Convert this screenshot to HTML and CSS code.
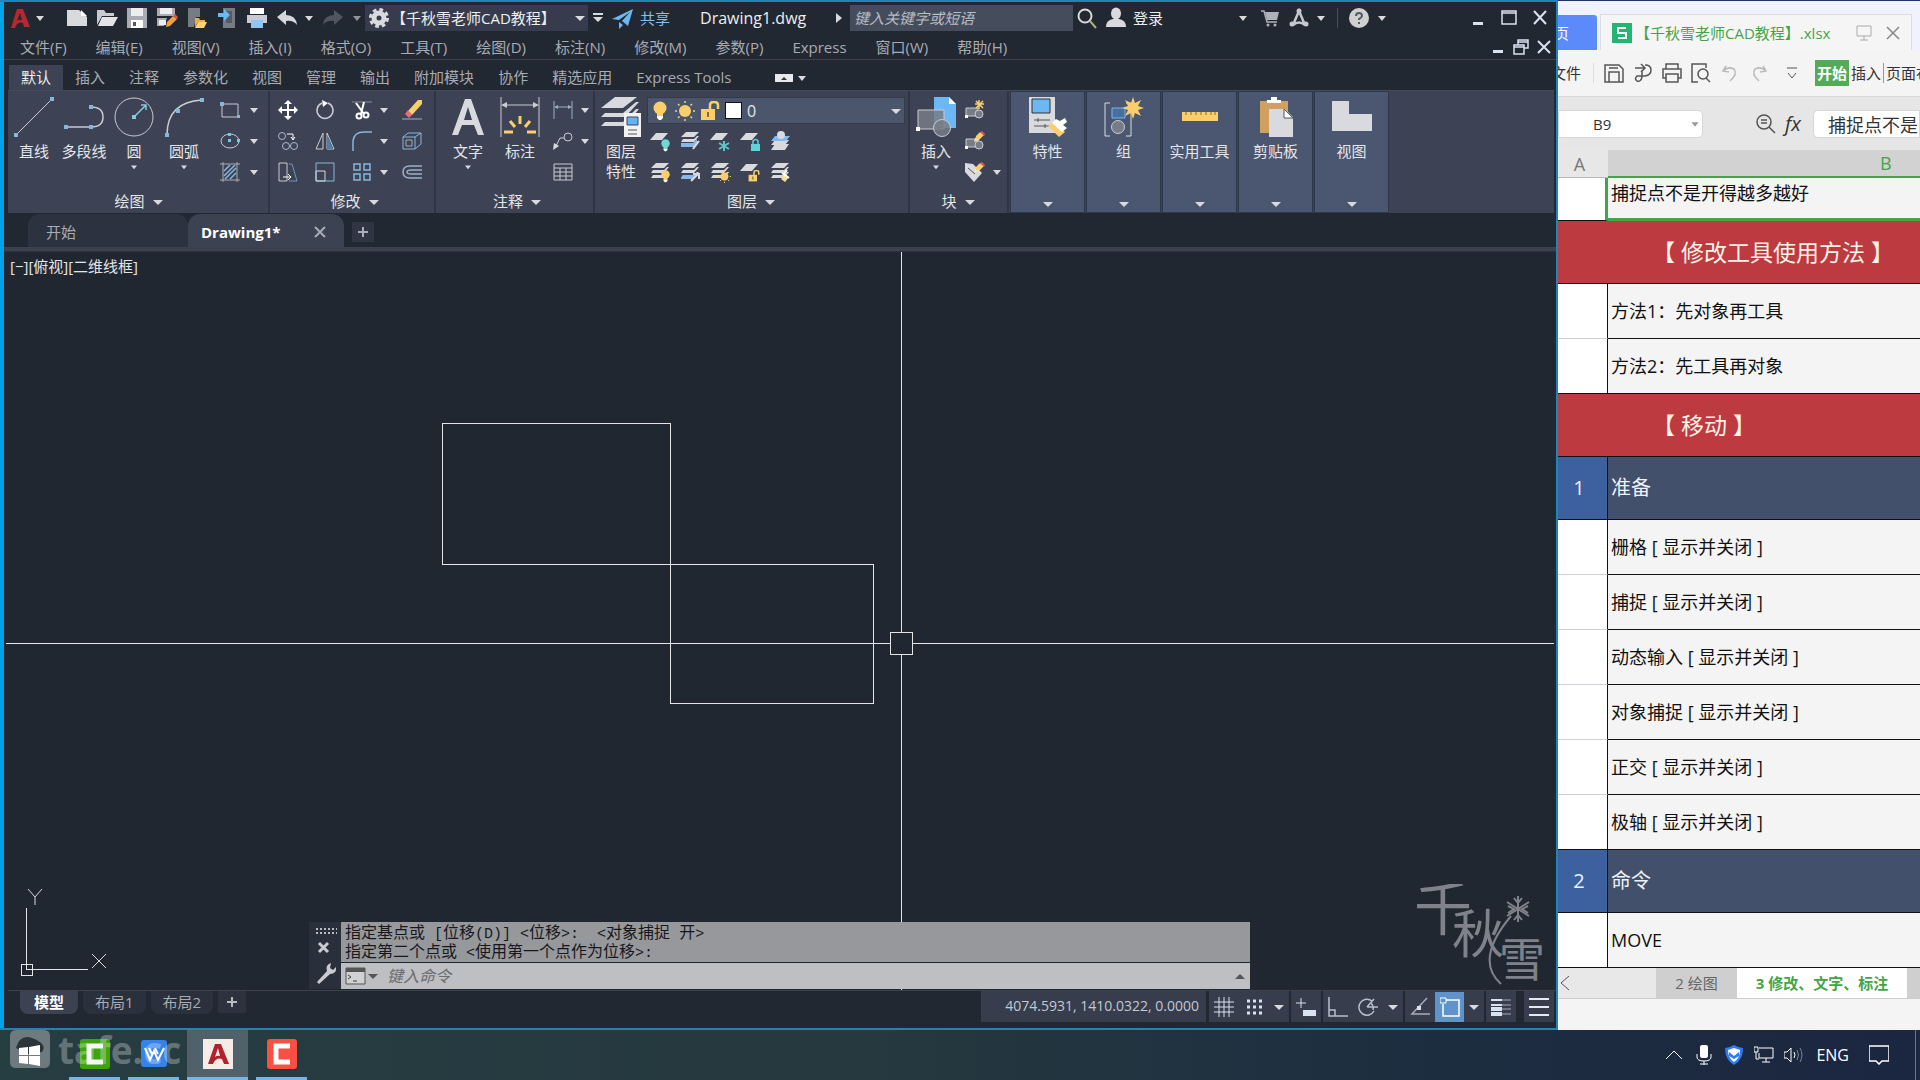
FILE: index.html
```html
<!DOCTYPE html>
<html lang="zh-CN">
<head>
<meta charset="utf-8">
<title>Drawing1.dwg</title>
<link rel="stylesheet" href="styles.css">
</head>
<body>
<svg class="sprite" aria-hidden="true">
  <symbol id="caret" viewBox="0 0 16 16"><path d="M4 6h8l-4 5z" fill="currentColor"/></symbol>
  <symbol id="caret-lg" viewBox="0 0 16 16"><path d="M3 6h10l-5 5z" fill="currentColor"/></symbol>
  <symbol id="stack" viewBox="0 0 20 20"><g fill="#d9dade"><path d="M6 1h13l-5 5H1z"/><path d="M3 8h11l3-3h2l-5 6H1z"/><path d="M3 13h11l3-3h2l-5 6H1z"/></g></symbol>
  <symbol id="sheet1" viewBox="0 0 20 20"><path d="M6 2h12l-6 7H0z" fill="#d9dade"/></symbol>
  <symbol id="bulb" viewBox="0 0 20 20"><circle cx="10" cy="7" r="6.500" fill="currentColor"/><path d="M7 12h6v4H7z" fill="currentColor"/><path d="M7 15h6v2l-2 2H9l-2-2z" fill="#fff"/></symbol>
  <symbol id="sun" viewBox="0 0 20 20"><circle cx="10" cy="10" r="6" fill="#fbce6c"/><path d="M10 0v2M10 18v2M0 10h2M18 10h2M3 3l1.500 1.500M15.500 15.500L17 17M17 3l-1.500 1.500M4.500 15.500L3 17" stroke="#fbce6c" stroke-width="1.500"/></symbol>
  <symbol id="lock" viewBox="0 0 20 20"><path d="M1 8h14v11H1z" fill="currentColor"/><path d="M10 9V4q0-3 4-3t4 3v4" fill="none" stroke="currentColor" stroke-width="2.500"/><path d="M8 11v5" stroke="#8a6a30" stroke-width="2"/></symbol>
  <symbol id="shapes" viewBox="0 0 20 20"><path d="M1 8h12v8H1z" fill="#777c87" stroke="#c9ccd3"/><circle cx="14" cy="14" r="4" fill="#777c87" stroke="#c9ccd3"/><path d="M0 15h3v3H0z" fill="#fff"/></symbol>
  <symbol id="pencil" viewBox="0 0 20 20"><path d="M10 9l1-4 4-4 4 3-5 5z" fill="#fbce6c"/><path d="M15 1l2-1 3 3-1 2z" fill="#e05060"/><path d="M9 11l1-4 4 2z" fill="#f2e3c4"/></symbol>
</svg>
<div class="desktop">
<main class="cad">
  <header class="titlebar">
    <button class="ic24" aria-label="应用程序菜单"><svg viewBox="0 0 24 24"><path d="M3 22L9 3h6l7 18h-6l-1-4q-5-2-7 3l-1 2z" fill="#b8262f"/><path d="M12 7l2 7q-3-1-5 1z" fill="#222832"/></svg></button>
    <svg class="caret"><use href="#caret"/></svg>
    <div class="quick">
      <button aria-label="新建"><svg viewBox="0 0 22 22"><path d="M1 3h12l8 7v9H1z" fill="#d9dade"/><path d="M15 3l6 6h-6z" fill="#fff"/></svg></button>
      <button aria-label="打开"><svg viewBox="0 0 22 22"><path d="M1 3h7l2 3h8v3H6L1 18z" fill="#c9cbd0"/><path d="M6 10h16l-5 9H2z" fill="#e3e4e8"/></svg></button>
      <button aria-label="保存"><svg viewBox="0 0 22 22"><path d="M1 1h20v20H1z" fill="#a9acb3"/><path d="M5 1h12v8H5z" fill="#eee"/><path d="M5 13h12v8H5z" fill="#fff"/><path d="M7 15h3v4H7z" fill="#555"/></svg></button>
      <button aria-label="另存为"><svg viewBox="0 0 22 22"><path d="M1 1h18v8H1zM1 11h10l-3 8H1z" fill="#a9acb3"/><path d="M4 1h12v6H4zM3 13h7v5H3z" fill="#eee"/><path d="M10 20l1-5 6-6 4 3-7 7z" fill="#f0a040"/><path d="M17 9l2-2 3 3-1 2z" fill="#e05050"/></svg></button>
      <button aria-label="从移动设备打开"><svg viewBox="0 0 22 22"><path d="M2 1h12v9h-4l-2 10H2z" fill="#777b84"/><path d="M9 11h4l1 2h5v2h-7l-3 5z" fill="#f0a850"/><path d="M12 15h9l-3 6H9z" fill="#ffd27a"/></svg></button>
      <button aria-label="保存到移动设备"><svg viewBox="0 0 22 22"><path d="M7 1h12v20H7z" fill="#777b84"/><path d="M10 4h6v12h-6z" fill="#555a65"/><path d="M2 6h6V2l6 6-6 6v-4H2z" fill="#6cb8f0"/></svg></button>
      <button aria-label="打印"><svg viewBox="0 0 22 22"><path d="M4 1h14v6H4z" fill="#fff"/><path d="M1 8h20v8H1z" fill="#c9cbd0"/><path d="M5 13h12v8H5z" fill="#8fc4f5"/></svg></button>
      <button aria-label="放弃"><svg viewBox="0 0 22 22"><path d="M1 10l9-7v5q10 0 11 10-4-5-11-4v4z" fill="#d5d7dc"/></svg></button>
    </div>
    <svg class="caret"><use href="#caret"/></svg>
    <button class="redo" aria-label="重做"><svg viewBox="0 0 22 22"><path d="M21 10l-9-7v5Q2 8 1 18q4-5 11-4v4z" fill="#50555f"/></svg></button>
    <svg class="caret dim"><use href="#caret"/></svg>
    <label class="workspace"><svg viewBox="0 0 20 20"><circle cx="10" cy="10" r="5" fill="none" stroke="#d9dade" stroke-width="5"/><circle cx="10" cy="10" r="8.500" fill="none" stroke="#d9dade" stroke-width="3" stroke-dasharray="3.700 3"/></svg><select aria-label="工作空间"><option>【千秋雪老师CAD教程】</option></select><svg class="caret"><use href="#caret-lg"/></svg></label>
    <svg class="more" viewBox="0 0 16 16"><path d="M3 3h10v2H3zM3 7h10l-5 5z" fill="#d9dade"/></svg>
    <button class="share"><svg viewBox="0 0 22 22"><path d="M0 12L21 2l-5 17-6-5 8-9-11 8z" fill="#6cb8f0"/><path d="M7 15l4 3-4 4z" fill="#6cb8f0"/></svg>共享</button>
    <h1>Drawing1.dwg</h1>
    <svg class="tri" viewBox="0 0 10 16"><path d="M2 3l6 5-6 5z" fill="#d9dade"/></svg>
    <input class="search" aria-label="搜索" placeholder="键入关键字或短语">
    <button class="ic24" aria-label="搜索"><svg viewBox="0 0 24 24"><circle cx="10" cy="10" r="6.500" fill="none" stroke="#d9dade" stroke-width="2"/><path d="M15 15l6 7" stroke="#aab078" stroke-width="2"/></svg></button>
    <button class="login"><svg viewBox="0 0 22 22"><ellipse cx="11" cy="6.500" rx="5" ry="6" fill="#d9dade"/><path d="M1 20q0-7 7-8h6q7 1 7 8z" fill="#d9dade"/></svg>登录</button>
    <div class="apps">
      <svg class="caret"><use href="#caret"/></svg>
      <button aria-label="购物车"><svg viewBox="0 0 20 20"><path d="M1 3h3l3 11h10" fill="none" stroke="#aeb1b7" stroke-width="1.500"/><path d="M5 4h14l-2 8H7z" fill="#aeb1b7"/><circle cx="8" cy="17" r="1.500" fill="#aeb1b7"/><circle cx="15" cy="17" r="1.500" fill="#aeb1b7"/></svg></button>
      <button aria-label="应用"><svg viewBox="0 0 20 20"><path d="M10 3L4 17q6-5 12 0z" fill="none" stroke="#c5c8ce" stroke-width="2.500"/><circle cx="10" cy="3" r="2.500" fill="#c5c8ce"/><circle cx="3" cy="16" r="2.500" fill="#c5c8ce"/><circle cx="17" cy="16" r="2.500" fill="#c5c8ce"/></svg></button>
      <svg class="caret tight"><use href="#caret"/></svg>
    </div>
    <div class="help"><button aria-label="帮助"><svg viewBox="0 0 20 20"><circle cx="10" cy="10" r="10" fill="#d0d0d0"/><path d="M7 8q0-3 3-3t3 3q0 1-3 3v1M10 14v2" fill="none" stroke="#555b66" stroke-width="2"/></svg></button><svg class="caret"><use href="#caret"/></svg></div>
    <div class="winbtns">
      <button aria-label="最小化"><svg viewBox="0 0 16 16"><path d="M3 12h10v3H3z" fill="#d9e2f0"/></svg></button>
      <button aria-label="最大化"><svg viewBox="0 0 16 16"><path d="M1 1h14v13H1zM1 3h14" fill="none" stroke="#d9e2f0" stroke-width="1.500"/></svg></button>
      <button aria-label="关闭"><svg viewBox="0 0 16 16"><path d="M2 1l12 13M14 1L2 14" stroke="#d9e2f0" stroke-width="2"/></svg></button>
    </div>
  </header>
  <nav class="menubar">
    <a href="#">文件(F)</a><a href="#">编辑(E)</a><a href="#">视图(V)</a><a href="#">插入(I)</a><a href="#">格式(O)</a><a href="#">工具(T)</a><a href="#">绘图(D)</a><a href="#">标注(N)</a><a href="#">修改(M)</a><a href="#">参数(P)</a><a href="#">Express</a><a href="#">窗口(W)</a><a href="#">帮助(H)</a>
    <div class="docbtns">
      <button aria-label="最小化图形"><svg viewBox="0 0 16 16"><path d="M3 11h10v3H3z" fill="#d9e2f0"/></svg></button>
      <button aria-label="还原图形"><svg viewBox="0 0 16 16"><path d="M5 6V1h10v8h-4M1 6h10v9H1zM1 8h10M5 3h10" fill="none" stroke="#d9e2f0" stroke-width="1.500"/></svg></button>
      <button aria-label="关闭图形"><svg viewBox="0 0 16 16"><path d="M2 2l12 12M14 2L2 14" stroke="#d9e2f0" stroke-width="2"/></svg></button>
    </div>
  </nav>
  <nav class="tabs">
    <a href="#" class="on">默认</a><a href="#">插入</a><a href="#">注释</a><a href="#">参数化</a><a href="#">视图</a><a href="#">管理</a><a href="#">输出</a><a href="#">附加模块</a><a href="#">协作</a><a href="#">精选应用</a><a href="#">Express Tools</a>
    <button class="fold" aria-label="最小化功能区"><svg viewBox="0 0 36 16"><path d="M2 4h18v8H2z" fill="#e8e9ec"/><path d="M8 10l3-3 3 3z" fill="#333"/><path d="M25 6h8l-4 5z" fill="#d9dade"/></svg></button>
  </nav>
  <section class="ribbon">
    <div class="panel draw">
      <div class="tools">
        <button class="big"><svg viewBox="0 0 40 40"><path d="M2 38L38 2" stroke="#c9ccd3"/><path d="M0 36h4v4H0zM36 0h4v4h-4z" fill="#86b8dc"/></svg>直线</button>
        <button class="big wide"><svg viewBox="0 0 40 40"><path d="M1 30h26q12 0 12-10T27 10" fill="none" stroke="#c9ccd3" stroke-width="1.500"/><path d="M0 28h4v4H0zM25 28h4v4h-4zM25 8h4v4h-4z" fill="#86b8dc"/></svg>多段线</button>
        <button class="big"><svg viewBox="0 0 40 40"><circle cx="20" cy="20" r="19" fill="none" stroke="#c9ccd3"/><path d="M20 20L32 8M27 8h5v5" fill="none" stroke="#86c8dc" stroke-width="1.500"/><path d="M18 18h4v4h-4z" fill="#86c8dc"/></svg>圆<svg class="caret"><use href="#caret"/></svg></button>
        <button class="big wide"><svg viewBox="0 0 40 40"><path d="M3 38Q3 5 38 3" fill="none" stroke="#c9ccd3" stroke-width="1.500"/><path d="M1 36h4v4H1zM36 1h4v4h-4zM12 12h4v4h-4z" fill="#86b8dc"/></svg>圆弧<svg class="caret"><use href="#caret"/></svg></button>
        <div class="small two">
          <svg viewBox="0 0 20 20"><path d="M2 4h16v13H2z" fill="none" stroke="#c9ccd3"/><path d="M0 2h4v4H0zM17 15h3v3h-3z" fill="#86b8dc"/></svg><svg class="caret"><use href="#caret"/></svg>
          <svg viewBox="0 0 20 20"><ellipse cx="10" cy="10" rx="9" ry="7" fill="none" stroke="#c9ccd3"/><path d="M8 8h3v3H8zM8 2h3v3H8zM17 8h3v3h-3z" fill="#6ccce0"/></svg><svg class="caret"><use href="#caret"/></svg>
          <svg viewBox="0 0 20 20"><path d="M3 0v20M17 0v20M0 2h20M0 18h20" stroke="#a9adb5" fill="none"/><path d="M4 9l6-6M4 14L15 3M5 17L16 6M10 17l6-6" stroke="#86b8dc" stroke-width="1.500"/></svg><svg class="caret"><use href="#caret"/></svg>
        </div>
      </div>
      <h2>绘图<svg class="caret"><use href="#caret-lg"/></svg></h2>
    </div>
    <div class="panel modify">
      <div class="tools">
        <div class="small five">
          <svg viewBox="0 0 20 20"><path d="M10 2v16M2 10h16" stroke="#fff" stroke-width="2"/><path d="M10 0l4 4H6zM10 20l4-4H6zM0 10l4-4v8zM20 10l-4-4v8z" fill="#fff"/></svg>
          <svg viewBox="0 0 20 20"><path d="M13 3A8 8 0 1 1 7 3" fill="none" stroke="#c9ccd3" stroke-width="1.500"/><path d="M7 0l6 3-5 4z" fill="#fff"/></svg>
          <svg viewBox="0 0 20 20"><path d="M0 2h20" stroke="#888d98"/><path d="M4 3l8 11M12 2l-3 12" stroke="#fff" stroke-width="2"/><circle cx="7" cy="16" r="2.500" fill="none" stroke="#fff" stroke-width="2"/><circle cx="14" cy="15" r="2.500" fill="none" stroke="#fff" stroke-width="2"/></svg>
          <svg class="caret"><use href="#caret"/></svg>
          <svg viewBox="0 0 20 20"><path d="M6 11L16 0h4v4L10 15z" fill="#fbce6c"/><path d="M3 14l3-4 4 5-3 3z" fill="#ec6a72"/><path d="M0 19h20" stroke="#86b8dc"/></svg>
          <svg viewBox="0 0 20 20"><g fill="none" stroke="#a9b9cc"><circle cx="4" cy="5" r="3.500"/><circle cx="8" cy="15" r="3.500"/><circle cx="16" cy="15" r="3.500"/></g><path d="M9 3h6v5M13 6l2 3 2-3" stroke="#fff" fill="none"/></svg>
          <svg viewBox="0 0 20 20"><path d="M8 2v16H1zM12 2v16h7z" fill="none" stroke="#c9ccd3"/><path d="M12 4v14h6z" fill="#4f7fa8"/></svg>
          <svg viewBox="0 0 20 20"><path d="M1 20V10Q2 1 12 1h8" fill="none" stroke="#86b8dc" stroke-width="1.500"/></svg>
          <svg class="caret"><use href="#caret"/></svg>
          <svg viewBox="0 0 20 20"><path d="M1 6h12v12H1zM1 6l5-4h13l-6 4M19 2v11l-6 5" fill="none" stroke="#86b8dc"/><path d="M4 9h6v6H4z" fill="none" stroke="#a9adb5"/></svg>
          <svg viewBox="0 0 20 20"><path d="M1 1h8v18H1z" fill="none" stroke="#c9ccd3"/><path d="M11 2h3l5 17h-8" fill="none" stroke="#6f96bd"/><path d="M5 15h8M10 12l3 3-3 3" stroke="#fff" fill="none"/></svg>
          <svg viewBox="0 0 20 20"><path d="M1 1h18v18H1z" fill="none" stroke="#86b8dc"/><path d="M1 9h9v10H1z" fill="none" stroke="#d9dade"/></svg>
          <svg viewBox="0 0 20 20"><g fill="none" stroke="#86b8dc" stroke-width="1.500"><path d="M2 2h6v6H2zM12 2h6v6h-6zM2 12h6v6H2zM12 12h6v6h-6z"/></g></svg>
          <svg class="caret"><use href="#caret"/></svg>
          <svg viewBox="0 0 20 20"><path d="M20 4H8q-7 0-7 6t7 6h12M20 8H9q-4 0-4 2t4 2h11" fill="none" stroke="#9cb0c6" stroke-width="1.500"/></svg>
        </div>
      </div>
      <h2>修改<svg class="caret"><use href="#caret-lg"/></svg></h2>
    </div>
    <div class="panel annotate">
      <div class="tools">
        <button class="big"><svg viewBox="0 0 40 40"><path d="M4 38L17 2h6l13 36h-6l-4-10H14l-4 10zM16 23h8l-4-13z" fill="#d9dade" fill-rule="evenodd"/></svg>文字<svg class="caret"><use href="#caret"/></svg></button>
        <button class="big wide"><svg viewBox="0 0 40 40"><path d="M1 0v40M39 0v40M3 8h34" stroke="#c9ccd3"/><path d="M1 8l6-3v6zM39 8l-6-3v6z" fill="#c9ccd3"/><path d="M20 19v8M10 24l5 6M30 24l-5 6M4 35h9M36 35h-9" stroke="#fbce6c" stroke-width="3"/></svg>标注</button>
        <div class="small two">
          <svg viewBox="0 0 20 20"><path d="M1 1v18M19 1v18M3 7h14" stroke="#9cb0c6"/><path d="M1 7l4-2v4zM19 7l-4-2v4z" fill="#9cb0c6"/></svg><svg class="caret"><use href="#caret"/></svg>
          <svg viewBox="0 0 20 20"><circle cx="15" cy="6" r="4" fill="none" stroke="#c9ccd3"/><path d="M11 7H7L3 15" stroke="#c9ccd3" fill="none"/><path d="M0 19l1-7 5 3z" fill="#d9dade"/></svg><svg class="caret"><use href="#caret"/></svg>
          <svg viewBox="0 0 20 20"><path d="M1 2h18v16H1zM1 6h18M1 10h18M1 14h18M7 6v12M13 6v12" fill="none" stroke="#c9ccd3"/></svg><span></span>
        </div>
      </div>
      <h2>注释<svg class="caret"><use href="#caret-lg"/></svg></h2>
    </div>
    <div class="panel layers">
      <div class="tools">
        <button class="big two-line"><svg viewBox="0 0 40 40"><g fill="#d9dade"><path d="M14 0h22L22 11H0z"/><path d="M4 16h18L35 5h3L24 20H0z"/><path d="M4 25h18L35 12h3L24 29H0z"/></g><path d="M23 16h17v24H23z" fill="#f2f2f2"/><path d="M26 20h11v8H26z" fill="#60b4f0" stroke="#446"/><path d="M27 33h9M27 37h9" stroke="#555"/></svg>图层<br>特性</button>
        <div class="layerbox">
          <label class="combo"><svg class="y" viewBox="0 0 20 20"><use href="#bulb"/></svg><svg viewBox="0 0 20 20"><use href="#sun"/></svg><svg class="y" viewBox="0 0 20 20"><use href="#lock"/></svg><span class="swatch"></span><select aria-label="图层"><option>0</option></select><svg class="caret"><use href="#caret-lg"/></svg></label>
          <div class="small lay">
            <svg viewBox="0 0 20 20"><use href="#sheet1"/><use class="t" href="#bulb" x="9" y="8" width="13" height="13"/></svg>
            <svg viewBox="0 0 20 20"><use href="#stack"/><path d="M1 12h12l4-4v3l-4 5H1z" fill="#86b8f0"/><path d="M19 10l-6 8" stroke="#d9dade" stroke-width="2"/></svg>
            <svg viewBox="0 0 20 20"><use href="#sheet1"/><path d="M14 10v10M9 12l10 6M19 12L9 18" stroke="#5fc4c8" stroke-width="2"/></svg>
            <svg viewBox="0 0 20 20"><use href="#sheet1"/><path d="M11 13h9v7h-9z" fill="#5fd4d8"/><path d="M13 13v-3q3-3 5 0v3" fill="none" stroke="#5fd4d8" stroke-width="1.500"/></svg>
            <svg viewBox="0 0 20 20"><path d="M5 13h14l-4 6H1zM5 9h14l-4 5H1z" fill="#d9dade"/><path d="M5 5h15l-4 5H1z" fill="#7fbcf5"/><circle cx="11" cy="4" r="4" fill="#d9dade"/></svg>
            <svg viewBox="0 0 20 20"><use href="#stack"/><use class="y" href="#bulb" x="9" y="8" width="13" height="13"/></svg>
            <svg viewBox="0 0 20 20"><use href="#stack"/><path d="M3 13h11l3-3v2l-4 5H1z" fill="#86b8f0"/><path d="M11 19l7-7M13 12h6v5" fill="none" stroke="#d9dade" stroke-width="2"/></svg>
            <svg viewBox="0 0 20 20"><use href="#stack"/><use href="#sun" x="8" y="8" width="13" height="13"/></svg>
            <svg viewBox="0 0 20 20"><use href="#sheet1"/><use class="y" href="#lock" x="8" y="8" width="12" height="12"/></svg>
            <svg viewBox="0 0 20 20"><use href="#stack"/><path d="M11 17l4-5 4 3-4 5z" fill="#fbe08c"/><path d="M14 12l3-4M12 11l7 5" stroke="#fff" stroke-width="2"/></svg>
          </div>
        </div>
      </div>
      <h2>图层<svg class="caret"><use href="#caret-lg"/></svg></h2>
    </div>
    <div class="panel block">
      <div class="tools">
        <button class="big"><svg viewBox="0 0 40 40"><path d="M18 0h15l7 7v24H18z" fill="#6cb8f5"/><path d="M33 0v7h7z" fill="#fff"/><path d="M2 13h26v19H2z" fill="#777c87" fill-opacity=".85" stroke="#c9ccd3"/><circle cx="26" cy="31" r="8.500" fill="#777c87" fill-opacity=".85" stroke="#c9ccd3"/><path d="M0 30h4v4H0z" fill="#fff"/></svg>插入<svg class="caret"><use href="#caret"/></svg></button>
        <div class="small two">
          <svg viewBox="0 0 20 20"><use href="#shapes"/><path d="M14 0v9M10 4h9M11 1l7 7M18 1l-7 7" stroke="#fbce6c" stroke-width="1.500"/></svg><span></span>
          <svg viewBox="0 0 20 20"><use href="#shapes"/><use href="#pencil"/></svg><span></span>
          <svg viewBox="0 0 20 20"><path d="M0 1l8 1 9 9-8 9L0 10z" fill="#d9dade"/><path d="M3 6l7 6" stroke="#555"/><use href="#pencil"/></svg><svg class="caret"><use href="#caret"/></svg>
        </div>
      </div>
      <h2>块<svg class="caret"><use href="#caret-lg"/></svg></h2>
    </div>
    <div class="folded">
      <button><svg viewBox="0 0 40 40"><path d="M1 0h26v36H1z" fill="#d9dade"/><path d="M4 2h18v14H4z" fill="#6cb8f5" stroke="#333"/><path d="M6 23h16M6 29h16M10 21v4M17 27v4" stroke="#555"/><path d="M20 29l7-5 10 11-6 5z" fill="#fbce6c"/><path d="M24 26l4-4 4 2 5-3 2 4-4 3 4 3-5 4z" fill="#fff"/></svg>特性<svg class="caret"><use href="#caret-lg"/></svg></button>
      <button><svg viewBox="0 0 40 40"><path d="M6 6H1v33h5M22 6h5v33h-5" fill="none" stroke="#d9dade"/><path d="M8 11h13v10H8z" fill="#4a6f9c" stroke="#6cb8f5"/><circle cx="14" cy="30" r="6.500" fill="#777c87" stroke="#c9ccd3"/><path d="M29 0l2 6 6-3-3 6 6 2-6 2 3 6-6-3-2 6-2-6-6 3 3-6-6-2 6-2-3-6 6 3z" fill="#fbce6c"/></svg>组<svg class="caret"><use href="#caret-lg"/></svg></button>
      <button><svg viewBox="0 0 40 40"><path d="M2 15h36v9H2z" fill="#fbce6c"/><path d="M6 15v3M11 15v3M16 15v3M21 15v3M26 15v3M31 15v3M35 15v3" stroke="#8a6a30"/></svg>实用工具<svg class="caret"><use href="#caret-lg"/></svg></button>
      <button><svg viewBox="0 0 40 40"><path d="M4 4h28v32H4z" fill="#d0a060"/><path d="M11 6V3h4V0h6v3h4v3z" fill="#fff"/><path d="M13 12h16l8 8v20H13z" fill="#d9dade"/><path d="M28 12v9h9z" fill="#fff" stroke="#555"/></svg>剪贴板<svg class="caret"><use href="#caret-lg"/></svg></button>
      <button><svg viewBox="0 0 40 40"><path d="M0 4h17v13h23v17H0z" fill="#d9dade"/></svg>视图<svg class="caret"><use href="#caret-lg"/></svg></button>
    </div>
  </section>
  <nav class="doctabs">
    <a href="#" class="idle">开始</a>
    <a href="#" class="on">Drawing1*<svg viewBox="0 0 12 12"><path d="M1 1l10 10M11 1L1 11" stroke="#a9adb5" stroke-width="2"/></svg></a>
    <button aria-label="新图形"><svg viewBox="0 0 12 12"><path d="M6 1v10M1 6h10" stroke="#a9adb5" stroke-width="2"/></svg></button>
  </nav>
  <section class="canvas">
    <svg class="drawing" aria-label="图形">
      <g fill="none" stroke="#e4e5e8" shape-rendering="crispEdges">
        <path d="M438 171h228v141H438zM666 312h203v139H666z"/>
        <line x1="897" y1="0" x2="897" y2="100%"/><line x1="2" y1="391" x2="100%" y2="391"/>
        <path d="M886 380h22v22h-22z" fill="#212731"/><path d="M17 712h11v11H17zM22 656v61h62"/>
      </g>
      <path d="M24 637l7 8 7-8M31 645v8M88 702l14 14M102 702l-14 14" fill="none" stroke="#d9dade"/>
    </svg>
    <p class="viewlabel">[−][俯视][二维线框]</p>
    <svg class="mark" viewBox="0 0 132 116" aria-label="千秋雪">
      <g fill="#7f828b"><text x="0" y="46" font-size="58">千</text><text x="38" y="69" font-size="52">秋</text><text x="85" y="92" font-size="46">雪</text></g>
      <path d="M104 12v26M93 18l22 14M115 18L93 32M100 14l4 5 4-5M100 36l4-5 4 5M94 22l6 3-6 4M114 22l-6 3 6 4M97 32Q60 76 87 100" fill="none" stroke="#7f828b" stroke-width="2"/>
    </svg>
    <div class="command">
      <div class="grip"><svg viewBox="0 0 22 66"><path d="M1 7h22M1 11h22" stroke="#b9bbc0" stroke-width="2" stroke-dasharray="2 2"/><path d="M4 21l9 9M13 21L4 30" stroke="#c9cbd0" stroke-width="3"/><path d="M2 60L12 49q-2-6 4-8l-1 5 3 2 3-3q1 7-6 7L4 62z" fill="#c9cbd0"/></svg></div>
      <div class="cmdbody">
        <div class="history"><p>指定基点或<span> [</span>位移<span>(D)] &lt;</span>位移<span>&gt;:&nbsp; &lt;</span>对象捕捉<span> </span>开<span>&gt;</span></p><p>指定第二个点或<span> &lt;</span>使用第一个点作为位移<span>&gt;:</span></p></div>
        <label class="prompt"><svg viewBox="0 0 34 20"><path d="M1 2h19v16H1z" fill="#d0d1d3" stroke="#555"/><path d="M1 2h19v4H1z" fill="#555"/><path d="M3 9l3 2-3 2M8 15h4" fill="none" stroke="#444"/><path d="M23 8h10l-5 5z" fill="#555"/></svg><input aria-label="命令" placeholder="键入命令"><svg class="up" viewBox="0 0 12 8"><path d="M1 7l5-5 5 5z" fill="#555"/></svg></label>
      </div>
    </div>
  </section>
  <footer class="status">
    <nav class="layouts"><a href="#" class="on">模型</a><a href="#">布局1</a><a href="#">布局2</a><button aria-label="新建布局"><svg viewBox="0 0 12 12"><path d="M6 1v10M1 6h10" stroke="#b9bbc0" stroke-width="2"/></svg></button></nav>
    <div class="coords">4074.5931, 1410.0322, 0.0000</div>
    <div class="toggles">
      <div><button aria-label="栅格"><svg viewBox="0 0 20 20"><path d="M5 0v20M10 0v20M15 0v20M0 5h20M0 10h20M0 15h20" stroke="#d9e2f0"/></svg></button><button aria-label="捕捉"><svg viewBox="0 0 20 20"><path d="M3 4h15M3 10h15M3 16h15" stroke="#d9e2f0" stroke-width="3" stroke-dasharray="3 3"/></svg></button><svg class="caret"><use href="#caret-lg"/></svg></div>
      <div><button aria-label="动态输入"><svg viewBox="0 0 20 20"><path d="M5 1v10M0 6h10" stroke="#d9e2f0"/><path d="M7 13h13v6H7z" fill="#d9e2f0"/></svg></button></div>
      <div><button aria-label="正交"><svg viewBox="0 0 20 20"><path d="M1 0v19h19M1 13h6v6" fill="none" stroke="#b9c0cc" stroke-width="1.500"/></svg></button><button aria-label="极轴"><svg viewBox="0 0 20 20"><path d="M16 14A8 8 0 1 1 14 4M9 10h11M9 10l7-8M13 6q3 3 2 7" fill="none" stroke="#b9c0cc" stroke-width="1.500"/></svg></button><svg class="caret"><use href="#caret-lg"/></svg></div>
      <div><button aria-label="对象捕捉追踪"><svg viewBox="0 0 20 20"><path d="M17 1L2 17h18" fill="none" stroke="#a9adb5" stroke-width="1.500"/><path d="M7 9h4v4H7z" fill="#d9e2f0"/></svg></button><button class="active" aria-label="对象捕捉"><svg viewBox="0 0 20 20"><path d="M6 3h13v16H3V7" fill="none" stroke="#fff" stroke-width="1.500"/><path d="M0 1h6v5H0z" fill="none" stroke="#fff"/></svg></button><svg class="caret"><use href="#caret-lg"/></svg></div>
      <div><button aria-label="线宽"><svg viewBox="0 0 20 20"><path d="M0 3h20M0 8h20M0 12h20M0 17h20" stroke="#a9adb5"/><path d="M0 3h11M0 8h11" stroke="#d9e2f0" stroke-width="2"/><path d="M0 12h11M0 17h11" stroke="#d9e2f0" stroke-width="4"/></svg></button></div>
      <div class="custom"><button aria-label="自定义"><svg viewBox="0 0 20 20"><path d="M0 2h20M0 10h20M0 18h20" stroke="#e4e9f0" stroke-width="2"/></svg></button></div>
    </div>
  </footer>
</main>

<aside class="wps">
  <nav class="wtabs"><a href="#" class="home">页</a><a href="#" class="file"><svg viewBox="0 0 20 20"><path d="M0 0h20v20H0z" fill="#22b573"/><path d="M14 5H6v5h8v5H6" fill="none" stroke="#fff" stroke-width="2"/></svg><span>【千秋雪老师CAD教程】.xlsx</span><svg class="faint" viewBox="0 0 20 20"><path d="M3 3h14v10H3zM10 13v4M6 17h8" fill="none" stroke="#aaa"/></svg><svg viewBox="0 0 20 20"><path d="M4 4l12 12M16 4L4 16" stroke="#888" stroke-width="1.500"/></svg></a></nav>
  <div class="wmenu">
    <a href="#">文件</a>
    <div class="wicons">
      <svg viewBox="0 0 20 20"><path d="M1 2h14l4 4v13H1zM5 19V9h10v10M5 5h9" /></svg>
      <svg viewBox="0 0 20 20"><path d="M2 5h9M8 1l4 4-4 4M12 2q6 0 6 5t-6 6H4q-3 3 0 5 4 1 5-4V7"/></svg>
      <svg viewBox="0 0 20 20"><path d="M4 6V1h12v5M4 15H1V6h18v9h-3M4 11h12v8H4z"/></svg>
      <svg viewBox="0 0 20 20"><path d="M7 19H1V1h14v4"/><circle cx="12" cy="11" r="5"/><path d="M15 15l4 4"/></svg>
      <svg class="faint" viewBox="0 0 20 20"><path d="M6 3L3 8l6 1M3 8q5-5 11-2 4 5-4 12"/></svg>
      <svg class="faint" viewBox="0 0 20 20"><path d="M14 3l3 5-6 1M17 8q-5-5-11-2-4 5 4 12"/></svg>
    </div>
    <svg class="chev" viewBox="0 0 10 14"><path d="M0 2h10M1 7l4 5 4-5" fill="none" stroke="#555"/></svg>
    <button>开始</button><a href="#">插入</a><a href="#" class="sep">页面布局</a>
  </div>
  <div class="formula">
    <label class="name"><input aria-label="名称框" value="B9"><svg class="caret"><use href="#caret"/></svg></label>
    <svg class="zoomi" viewBox="0 0 20 20"><circle cx="8" cy="8" r="7" fill="none" stroke="#555" stroke-width="1.500"/><path d="M5 6h6M5 9h6M13 13l6 6" stroke="#555" stroke-width="1.500"/></svg>
    <i>fx</i>
    <input class="fx" aria-label="编辑栏" value="捕捉点不是开得越多越好">
  </div>
  <table>
    <colgroup><col class="ca"><col></colgroup>
    <thead><tr><th>A</th><th class="cb">B</th></tr></thead>
    <tbody>
      <tr class="sel"><td></td><td><span>捕捉点不是开得越多越好</span></td></tr>
      <tr class="red"><td colspan="2">【 修改工具使用方法 】</td></tr>
      <tr><td></td><td>方法1：先对象再工具</td></tr>
      <tr><td class="k"></td><td>方法2：先工具再对象</td></tr>
      <tr class="red"><td colspan="2">【 移动 】</td></tr>
      <tr class="blue"><td>1</td><td>准备</td></tr>
      <tr><td></td><td>栅格 [ 显示并关闭 ]</td></tr>
      <tr><td></td><td>捕捉 [ 显示并关闭 ]</td></tr>
      <tr><td></td><td>动态输入 [ 显示并关闭 ]</td></tr>
      <tr><td></td><td>对象捕捉 [ 显示并关闭 ]</td></tr>
      <tr><td></td><td>正交 [ 显示并关闭 ]</td></tr>
      <tr><td class="k"></td><td>极轴 [ 显示并关闭 ]</td></tr>
      <tr class="blue"><td>2</td><td>命令</td></tr>
      <tr><td class="k"></td><td>MOVE</td></tr>
    </tbody>
  </table>
  <nav class="sheets"><svg viewBox="0 0 10 16"><path d="M9 1L1 8l8 7" fill="none" stroke="#555"/></svg><a href="#">2 绘图</a><a href="#" class="on">3 修改、文字、标注</a><span></span></nav>
</aside>

<footer class="taskbar">
  <button class="start" aria-label="开始"><svg viewBox="0 0 40 40"><path d="M6 0h28q6 0 6 6v26q0 6-6 6H6q-6 0-6-6V6q0-6 6-6z" fill="#6d7b80"/><path d="M6 18q4-14 16-10 16 6 10 14l-14 2z" fill="#2c363a"/><path d="M9 18l9-1v8H9zM19 17l11-2v10H19zM9 26h9v8l-9-1zM19 26h11v10l-11-2z" fill="#fff"/></svg></button>
  <span class="tafe">tafe.cc</span>
  <nav class="tasks">
    <button aria-label="Camtasia"><svg viewBox="0 0 30 30"><rect width="30" height="30" rx="3" fill="#3da50b"/><path d="M23 7H9v16h14" fill="none" stroke="#f5f5f5" stroke-width="5"/></svg></button>
    <button aria-label="WPS"><svg viewBox="0 0 30 30"><rect x="2" y="1" width="26" height="27" rx="3" fill="#3482ea"/><path d="M6 9l5 12 4-9 4 9 6-12M10 9l3 6M16 9l3 6" fill="none" stroke="#fff" stroke-width="2"/></svg></button>
    <button class="cur" aria-label="AutoCAD"><svg viewBox="0 0 30 30"><path d="M0 0h30v30H0z" fill="#f5ece8"/><path d="M5 25L12 5h6l8 20h-5l-2-5q-5-2-8 3l-1 2z" fill="#b0222c"/><path d="M15 9l2 8q-3-1-5 1z" fill="#f5ece8"/></svg></button>
    <button aria-label="Camtasia 录像机"><svg viewBox="0 0 30 30"><rect width="30" height="30" rx="3" fill="#fb4f42"/><path d="M23 7H9v16h14" fill="none" stroke="#fff" stroke-width="5"/></svg></button>
  </nav>
  <div class="tray">
    <svg viewBox="0 0 20 20"><path d="M2 14l8-8 8 8" fill="none" stroke="#fff"/></svg>
    <svg viewBox="0 0 20 20"><rect x="6" y="0" width="8" height="13" rx="2" fill="#fff"/><path d="M3 9v3q0 4 7 4t7-4V9M10 16v4M6 19h8" fill="none" stroke="#fff"/></svg>
    <svg viewBox="0 0 20 20"><path d="M10 0q5 3 9 3 0 12-9 17Q1 15 1 3q4 0 9-3z" fill="#2f7cf6"/><path d="M10 3l6 2q0 8-6 12Q4 13 4 5z" fill="#fff"/><path d="M5 7l5 4 5-4v4l-5 3-5-3z" fill="#2f7cf6"/></svg>
    <svg viewBox="0 0 20 20"><path d="M5 3h14v10H5V8M12 13v4M8 17h8M0 2h4v5H0zM2 7v7h3" fill="none" stroke="#fff"/></svg>
    <svg viewBox="0 0 20 20"><path d="M0 7h3l4-4v14l-4-4H0zM10 7q2 3 0 6" fill="none" stroke="#fff"/><path d="M13 5q3 5 0 10M16 3q4 7 0 14" fill="none" stroke="#7d879a"/></svg>
    <span>ENG</span>
    <svg class="note" viewBox="0 0 20 20"><path d="M0 1h20v15h-7l-3 3-3-3H0z" fill="none" stroke="#fff" stroke-width="1.500"/></svg>
  </div>
</footer>
</div>
</body>
</html>
```
FILE: styles.css
```css
* { box-sizing: border-box; margin: 0; padding: 0; }
html, body { height: 100%; }
body { font: 15px/20px "Open Sans", "Noto Sans CJK SC", sans-serif; background: #222832; overflow: hidden; }
a { color: inherit; text-decoration: none; white-space: nowrap; }
button, input, select { font: inherit; color: inherit; background: none; border: 0; outline: 0; min-width: 0; white-space: nowrap; }
button svg, label svg { display: block; flex: none; }
select { appearance: none; }
.sprite { position: absolute; width: 0; height: 0; }
.caret { width: 16px; height: 16px; flex: none; color: #d9dade; }
.desktop { min-height: 100vh; display: grid; grid-template: minmax(0, 1fr) 50px / minmax(0, 1fr) 362px; }

.cad { display: flex; flex-direction: column; min-width: 0; border: solid #1d86b4; border-width: 2px 2px 2px 0; box-shadow: inset 4px 0 #00a2e8; padding-left: 4px; background: #222832; color: #a9abb2; }
.titlebar { height: 32px; display: flex; align-items: center; padding-left: 4px; flex: none; color: #eee; }
.titlebar button svg { width: 22px; height: 22px; }
.titlebar .ic24, .titlebar .ic24 svg { width: 24px; height: 24px; }
.quick { display: flex; gap: 8px; margin: 0 3px 0 18px; }
.redo { margin: 0 5px; }
.dim { opacity: .6; }
.workspace { width: 223px; height: 26px; background: #363c4d; display: flex; align-items: center; gap: 2px; padding: 0 0 0 4px; }
.workspace svg:first-child { width: 20px; height: 20px; }
.workspace select { flex: 1; }
.more { width: 16px; height: 16px; margin: 0 6px 0 2px; flex: none; }
.share { display: flex; align-items: center; gap: 6px; color: #8cbfe8; margin-right: 30px; }
h1 { font-size: 16px; font-weight: 400; width: 134px; }
.tri { width: 10px; height: 16px; margin-right: 6px; }
.search { width: 223px; height: 26px; padding: 0 4px; background: #454c5c; margin-right: 2px; }
.search::placeholder { color: #b9bcc4; font-style: italic; opacity: 1; }
.login { display: flex; align-items: center; gap: 6px; margin-left: 6px; }
.apps { display: flex; align-items: center; margin-left: 72px; gap: 9px; padding-right: 8px; border-right: 1px solid #484c56; }
.apps button svg { width: 20px; height: 20px; }
.apps .tight { margin-left: -5px; }
.help { display: flex; align-items: center; margin-left: 11px; gap: 5px; }
.help button svg { width: 20px; height: 20px; }
.winbtns { display: flex; gap: 15px; margin-left: auto; padding-right: 8px; }
.winbtns button svg { width: 16px; height: 16px; }
.menubar { height: 26px; display: flex; align-items: center; gap: 29px; padding-left: 16px; border-bottom: 1px solid #3c414d; flex: none; }
.docbtns { display: flex; gap: 7px; margin-left: auto; padding-right: 4px; }
.docbtns svg { width: 16px; height: 16px; }
.tabs { height: 30px; display: flex; align-items: flex-end; padding-left: 5px; flex: none; }
.tabs a { height: 25px; line-height: 25px; padding: 0 12px; }
.tabs .on { background: #3d4354; color: #eee; }
.fold { height: 25px; margin-left: 29px; }
.fold svg { width: 36px; height: 16px; }

.ribbon { display: flex; height: 123px; margin: 0 2px 0 4px; background: #3d4354; color: #e4e5e8; flex: none; border-top: 1px solid #464b59; }
.panel { display: flex; flex-direction: column; border-right: 2px solid #303544; flex: none; }
.draw { width: 262px; padding-left: 4px; } .modify { width: 166px; padding-left: 8px; } .annotate { width: 159px; padding-left: 8px; }
.layers { width: 315px; padding-left: 2px; } .block { width: 99px; padding-left: 2px; }
.tools { display: flex; flex: 1; }
.big { width: 44px; display: flex; flex-direction: column; align-items: center; padding-top: 6px; line-height: 20px; }
.annotate .big, .layers .big, .block .big { width: 48px; }
.big.wide, .annotate .big.wide { width: 56px; }
.big > svg:first-child { width: 40px; height: 40px; margin-bottom: 4px; }
.big .caret { height: 12px; }
.small { display: grid; grid-auto-rows: 31px; padding-top: 3px; align-items: center; }
.small > svg:not(.caret) { width: 20px; height: 20px; overflow: visible; }
.small.two { grid-template-columns: 24px 16px; margin-left: 5px; }
.draw .small.two { grid-template-columns: 26px 16px; margin-left: 8px; }
.small.five { grid-template-columns: 37px 37px 24px 26px 20px; }
.layerbox { padding-top: 6px; margin-left: 2px; }
.combo { width: 258px; height: 27px; display: flex; align-items: center; gap: 5px; background: #4b566d; border: 1px solid #333a4a; padding: 0 0 0 2px; }
.combo > svg:not(.caret) { width: 20px; height: 20px; }
.combo select { flex: 1; font-size: 16px; }
.swatch { width: 17px; height: 17px; background: #fff; border: 1px solid #111; }
.small.lay { grid-template-columns: repeat(5, 30px); padding: 1px 0 0 3px; }
.y { color: #fbce6c; } .t { color: #6fd8d4; }
.panel h2 { font-size: 15px; font-weight: 400; line-height: 20px; height: 22px; display: flex; justify-content: center; align-items: flex-start; gap: 5px; }
.panel h2 .caret { margin-top: 3px; }
.folded { display: flex; gap: 3px; padding: 1px 0 1px 2px; }
.folded button { width: 73px; background: #4b5770; box-shadow: 0 0 0 1px #2f374d; display: flex; flex-direction: column; align-items: center; padding-top: 5px; line-height: 20px; }
.folded svg:first-child { width: 40px; height: 40px; margin-bottom: 4px; }
.folded .caret { margin-top: auto; }

.doctabs { height: 39px; display: flex; align-items: flex-end; padding: 0 2px 4px 24px; border-bottom: 1px solid #2c313d; box-shadow: inset 0 -4px #3c414f; flex: none; }
.doctabs a { height: 33px; width: 160px; border-radius: 12px 12px 0 0; background: #2d3240; padding: 3px 18px 0; display: flex; justify-content: space-between; align-items: center; }
.doctabs .on { background: #3c4251; color: #fff; font-weight: 700; width: 156px; padding: 3px 18px 0 13px; }
.doctabs a svg { width: 12px; height: 12px; }
.doctabs button { width: 22px; height: 20px; background: #303543; margin: 0 0 5px 8px; padding: 4px 5px; }
.doctabs button svg { width: 12px; height: 12px; }
.canvas { flex: 1; min-height: 0; position: relative; background: #212731; margin-right: 2px; }
.drawing { position: absolute; inset: 0; width: 100%; height: 100%; }
.viewlabel { position: absolute; left: 6px; top: 4px; color: #e4e5e8; }
.mark { position: absolute; right: 8px; bottom: -10px; width: 132px; height: 116px; z-index: 1; }
.command { position: absolute; left: 305px; right: 304px; bottom: 1px; display: flex; height: 67px; }
.grip { width: 32px; background: #2a303b; padding-left: 6px; }
.grip svg { width: 22px; height: 66px; }
.cmdbody { flex: 1; background: #212731; display: flex; flex-direction: column; gap: 1px; }
.history { height: 40px; background: #96989c; color: #16181c; padding: 1px 4px; font-size: 16px; line-height: 19px; white-space: nowrap; }
.history p { height: 19px; }
.history span { font: 15px/1 "Liberation Mono", monospace; white-space: pre; }
.prompt { flex: 1; background: #bebfc2; display: flex; align-items: center; padding: 0 4px; gap: 8px; }
.prompt svg { width: 34px; height: 20px; }
.prompt input { flex: 1; font-size: 16px; line-height: 20px; font-style: italic; }
.prompt input::placeholder { color: #6a6c70; opacity: 1; }
.prompt .up { width: 12px; height: 8px; }

.status { height: 38px; display: flex; border-top: 1px solid #3c414d; margin-left: 4px; align-items: flex-start; flex: none; }
.layouts { display: flex; gap: 5px; padding-left: 12px; flex: 1; }
.layouts a { height: 23px; line-height: 22px; padding: 0 12px; background: #2a303c; border-radius: 0 0 8px 8px; }
.layouts .on { color: #fff; font-weight: 700; background: #3c4251; padding: 0 14px; }
.layouts button { width: 28px; height: 22px; background: #2d323e; padding: 5px 8px; }
.layouts svg { width: 12px; height: 12px; }
.coords { width: 225px; height: 31px; line-height: 30px; font-size: 14px; text-align: right; padding-right: 7px; background: #373d4c; color: #c3c8d2; margin-right: 3px; white-space: nowrap; }
.toggles { display: flex; gap: 2px; height: 31px; padding-right: 2px; }
.toggles > div { background: #373d4c; display: flex; align-items: center; }
.toggles button { width: 30px; height: 30px; padding: 5px; }
.toggles button svg { width: 20px; height: 20px; }
.toggles .active { width: 29px; background: #5e93cb; }
.toggles .caret { margin: 0 2px; }
.toggles .custom { margin-left: 6px; }

.wps { background: #f4f4f4; color: #333; overflow: hidden; border-top: 1px solid #1c2f66; display: flex; flex-direction: column; }
.wtabs { height: 49px; background: #f0f3fd; display: flex; align-items: flex-end; gap: 3px; flex: none; }
.home { width: 39px; height: 35px; line-height: 36px; background: #5b8bfa; color: #fff; border-radius: 0 3px 0 0; text-indent: -4px; }
.file { width: 312px; height: 36px; background: #f5f5f5; border: solid #dadce4; border-width: 1px 1px 0; display: flex; align-items: center; gap: 3px; color: #45a348; padding: 0 8px 0 11px; }
.file svg { width: 20px; height: 20px; flex: none; }
.file span { flex: 1; }
.file .faint { margin-right: 6px; }
.wmenu { height: 47px; display: flex; align-items: center; flex: none; border-bottom: 1px solid #d8d8d8; overflow: hidden; }
.wmenu > * { flex: none; }
.wmenu > a:first-child { margin: 0 12px 0 -7px; }
.wicons { display: flex; gap: 9px; padding: 0 18px 0 10px; border-left: 1px solid #ddd; }
.wicons svg { width: 20px; height: 20px; fill: none; stroke: #555; stroke-width: 1.5; }
.wicons .faint { stroke: #bbb; }
.chev { width: 10px; height: 14px; margin-right: 18px; }
.wmenu button { width: 34px; height: 26px; background: #54aa56; color: #fff; font-weight: 700; margin-right: 2px; }
.wmenu .sep { border-left: 1px solid #999; margin-left: 2px; padding-left: 2px; }
.formula { height: 53px; background: #e6e6e6; display: flex; align-items: center; flex: none; }
.name { width: 145px; height: 28px; background: #fff; border-radius: 0 5px 5px 0; border: 1px solid #d6d6d6; display: flex; align-items: center; }
.name input { width: 90px; flex: 1; padding-left: 34px; }
.name .caret { color: #999; width: 14px; }
.zoomi { width: 20px; height: 20px; margin: 0 9px 0 53px; }
.formula i { font-size: 20px; width: 28px; }
.fx { flex: 1; height: 28px; background: #fff; border: 1px solid #d6d6d6; border-radius: 5px 0 0 5px; padding-left: 14px; font-size: 18px; }
table { width: 100%; table-layout: fixed; border-spacing: 0; font-size: 18px; flex: none; }
.ca { width: 50px; }
th { height: 28px; font-weight: 400; color: #777; background: #e7e7e7; border-bottom: 1px solid #bbb; padding-right: 7px; }
th.cb { background: #d2d2d2; color: #45a348; border-bottom: 2px solid #45a348; padding-left: 272px; text-align: left; }
td { height: 55px; background: #f4f4f4; color: #111; border-bottom: 1px solid #111; padding: 0 3px; white-space: nowrap; overflow: hidden; }
td:first-child { background: #fff; border-right: 1px solid #111; border-bottom-color: #d0d0d8; text-align: center; padding: 0 7px 0 0; }
td.k, .sel td:first-child, .blue td:first-child { border-bottom-color: #111; }
.sel td { height: 43px; vertical-align: top; padding-top: 5px; border-bottom: 3px solid #45a348; }
.sel td:first-child { border-bottom: 1px solid #111; border-right: 3px solid #45a348; }
.red td, .red td:first-child { height: 63px; background: #bd3a40; color: #fff3e8; border-right: 0; border-bottom-color: #111; text-align: left; padding-left: 94px; font-size: 23px; }
.blue td, .blue td:first-child { height: 63px; background: #43506b; color: #eef2fa; font-size: 20px; }
.blue td:first-child { background: #3d619f; }
.sheets { height: 31px; display: flex; align-items: center; background: #e8e8e8; flex: none; border-bottom: 1px solid #ccc; }
.sheets svg { width: 10px; height: 16px; margin: 0 86px 0 2px; flex: none; }
.sheets a { width: 81px; line-height: 30px; background: #cfcfcf; text-align: center; color: #666; flex: none; }
.sheets .on { width: 170px; background: #fff; color: #45a348; font-weight: 700; }
.sheets span { flex: 1; height: 30px; background: #cfcfcf; }

.taskbar { grid-column: 1 / -1; background: linear-gradient(90deg, #263d42, #25393f 45%, #1e2f40 70%, #1b2640); display: flex; position: relative; color: #fff; }
.start { width: 69px; padding-left: 10px; display: flex; }
.start svg { width: 40px; height: 40px; }
.tafe { position: absolute; z-index: 1; left: 58px; top: 0; font: 700 37px/40px "Open Sans", sans-serif; color: rgba(255, 255, 255, .3); pointer-events: none; }
.tasks { display: flex; gap: 8px; position: relative; }
.tasks button { width: 51px; display: flex; align-items: center; justify-content: center; border-bottom: 3px solid #76b5e8; }
.tasks .cur { width: 61px; background: #50616a; }
.tasks svg { width: 30px; height: 30px; }
.tray { margin-left: auto; display: flex; align-items: center; gap: 10px; border-right: 1px solid #6d788c; padding-right: 26px; margin-right: 4px; font-size: 16px; }
.tray svg { width: 20px; height: 20px; }
.tray span { margin-left: 2px; }
.tray .note { margin-left: 10px; }
```
